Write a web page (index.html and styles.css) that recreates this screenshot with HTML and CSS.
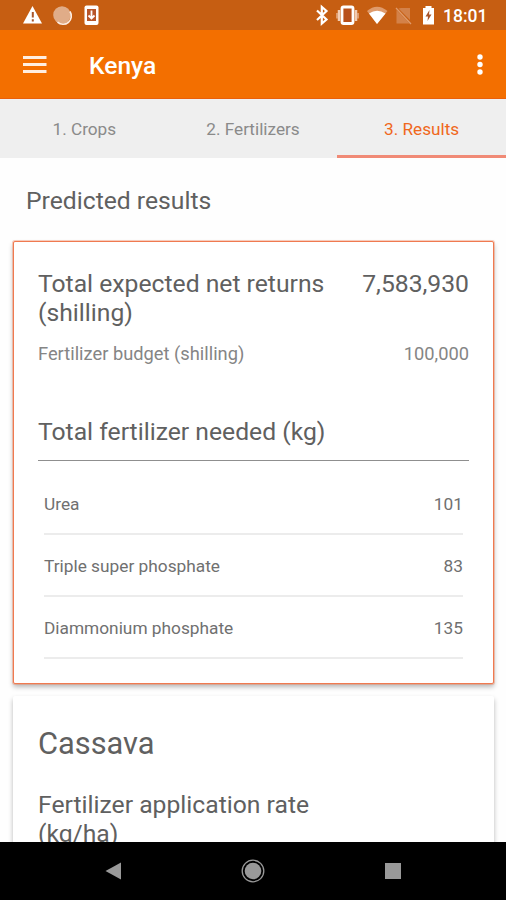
FILE: index.html
```
<!DOCTYPE html>
<html lang="en">
<head>
    <meta charset="UTF-8">
    <meta name="viewport" content="width=device-width, initial-scale=1.0">
    <title>Kenya - Results</title>
    <link rel="stylesheet" href="styles.css">
</head>
<body>
    <div class="status-bar">
        <svg width="120" height="30" viewBox="0 0 120 30">
            <path d="M32.5 6 L42 23.5 H23 Z" fill="#fff"/>
            <path d="M32.8 12 V17.5 M32.8 19.3 V21.5" stroke="#a8552a" stroke-width="2"/>
            <circle cx="62" cy="15" r="8.8" fill="#e0ac88"/>
            <path d="M70 11.5 A8.3 8.3 0 0 1 57.5 22.2" fill="none" stroke="#fdeee4" stroke-width="1.6"/>
            <rect x="84.5" y="5.5" width="14" height="19.5" rx="2" fill="#fff"/>
            <rect x="87" y="9" width="9" height="12" fill="#b8562a"/>
            <path d="M91.5 10.5 V18 M88.5 15.5 L91.5 18.5 L94.5 15.5" fill="none" stroke="#fff" stroke-width="1.8"/>
        </svg>
        <svg class="status-right" width="138" height="30" viewBox="0 0 138 30">
            <path d="M17 10.5 L26.5 19.5 L21.8 23.5 V7 L26.5 11 L17 20" fill="none" stroke="#fff" stroke-width="2.2"/>
            <rect x="42" y="7" width="11" height="16.5" rx="1.5" fill="#b8501a" stroke="#fff" stroke-width="2.8"/>
            <path d="M39 10 V21 M56 10 V21" stroke="#f1cdb5" stroke-width="2.5"/>
            <path d="M37 13 V18.5 M58 13 V18.5" stroke="#e6b08b" stroke-width="1.5"/>
            <path d="M67 11 Q77 2.5 87.5 11 L77 24 Z" fill="#df9b6c"/>
            <path d="M69 13.5 Q77 8 85.5 13.5 L77 24 Z" fill="#fff"/>
            <path d="M101 8 H110 V20 L98.500 8.500 Z M96.500 10 L109.500 23.500 H96.500 Z" fill="#d38149"/>
            <path d="M96 8 L111 24" stroke="#df9b6c" stroke-width="1.2"/>
            <path d="M125.5 6 H131.5 V8 H134 V24.5 H123 V8 H125.5 Z" fill="#fff"/>
            <path d="M129.5 10 L125.5 16.5 H128 L127.5 21 L131.5 14.5 H129 Z" fill="#a8552a"/>
        </svg>
        <span class="clock">18:01</span>
    </div>

    <div class="app-bar">
        <svg class="menu-icon" width="24" height="18" viewBox="0 0 24 18">
            <path d="M0 1.500 H23.500 M0 8.500 H23.500 M0 15.500 H23.500" stroke="#ffeee0" stroke-width="2.8"/>
        </svg>
        <h1>Kenya</h1>
        <svg class="more-icon" width="6" height="22" viewBox="0 0 6 22">
            <circle cx="3" cy="3" r="2.7" fill="#fff"/>
            <circle cx="3" cy="10.5" r="2.7" fill="#fff"/>
            <circle cx="3" cy="18" r="2.7" fill="#fff"/>
        </svg>
    </div>

    <div class="tabs">
        <div class="tab">1. Crops</div>
        <div class="tab">2. Fertilizers</div>
        <div class="tab active">3. Results</div>
    </div>

    <div class="content">
        <h2 class="page-title">Predicted results</h2>

        <div class="card summary">
            <div class="line returns">
                <span>Total expected net returns (shilling)</span>
                <span>7,583,930</span>
            </div>
            <div class="line budget">
                <span>Fertilizer budget (shilling)</span>
                <span>100,000</span>
            </div>
            <h3 class="needed">Total fertilizer needed (kg)</h3>
            <div class="list">
                <div class="row"><span>Urea</span><span>101</span></div>
                <div class="row"><span>Triple super phosphate</span><span>83</span></div>
                <div class="row"><span>Diammonium phosphate</span><span>135</span></div>
            </div>
        </div>

        <div class="card crop">
            <h2 class="crop-name">Cassava</h2>
            <p class="crop-rate">Fertilizer application rate (kg/ha)</p>
        </div>
    </div>

    <div class="nav-bar">
        <svg width="24" height="24" viewBox="0 0 24 24">
            <path d="M4.5 12 L20 3.5 V20.5 Z" fill="#999"/>
        </svg>
        <svg width="24" height="24" viewBox="0 0 24 24">
            <circle cx="12" cy="12" r="8.3" fill="#999"/>
            <circle cx="12" cy="12" r="10.8" fill="none" stroke="#999" stroke-width="1.3"/>
        </svg>
        <svg width="24" height="24" viewBox="0 0 24 24">
            <rect x="4" y="4" width="16" height="16" fill="#999"/>
        </svg>
    </div>
</body>
</html>
```
FILE: styles.css
```
* {
    box-sizing: border-box;
}
body {
    margin: 0;
    height: 900px;
    display: flex;
    flex-direction: column;
    overflow: hidden;
    font-family: Roboto, sans-serif;
    background-color: #fefefe;
    color: #606060;
}
h1, h2, h3, p {
    margin: 0;
    font-weight: 400;
}
.status-bar {
    display: flex;
    height: 30px;
    flex: none;
    background-color: #c65e12;
}
.status-right {
    margin-left: 180px;
}
.clock {
    padding-left: 5px;
    line-height: 32px;
    font-size: 17.5px;
    font-weight: 500;
    color: #fff;
}
.app-bar {
    display: flex;
    align-items: center;
    flex: none;
    height: 69px;
    padding: 2px 23px 0;
    background-color: #f36f00;
    border-bottom: 1px solid #ea5f0a;
}
.app-bar h1 {
    margin-left: 42px;
    font-size: 24.6px;
    font-weight: 500;
    color: #fff;
}
.more-icon {
    margin-left: auto;
}
.tabs {
    display: grid;
    grid-template-columns: repeat(3, 1fr);
    flex: none;
    height: 59px;
    background-color: #efefef;
}
.tab {
    padding-top: 4px;
    line-height: 52px;
    font-size: 17.2px;
    text-align: center;
    color: #8a8a8a;
}
.tab.active {
    color: #f0681c;
    border-bottom: 3px solid #f08a76;
}
.content {
    flex: 1;
    min-height: 0;
    overflow: hidden;
    padding: 0 12px 0 13px;
}
.page-title {
    padding: 28px 0 0 13px;
    font-size: 24.7px;
    line-height: 29px;
}
.card {
    background-color: #fff;
    border-radius: 2px;
    box-shadow: 0 3px 5px rgba(0, 0, 0, 0.28);
}
.summary {
    height: 443px;
    margin-top: 26px;
    padding: 27px 24px 0;
    border: 1px solid #f07a50;
    box-shadow: 0 0 0 1px rgba(240, 122, 80, 0.35), 0 3px 5px rgba(0, 0, 0, 0.28);
}
.line {
    display: flex;
    justify-content: space-between;
}
.returns {
    font-size: 24.7px;
    line-height: 29px;
}
.returns span:first-child {
    width: 300px;
}
.budget {
    margin-top: 17px;
    font-size: 18.3px;
    line-height: 20px;
    color: #858585;
}
.needed {
    margin-top: 53px;
    padding-bottom: 14px;
    font-size: 24.7px;
    line-height: 29px;
    border-bottom: 1px solid #8f8f8f;
}
.list {
    padding: 12px 6px 0;
}
.row {
    display: flex;
    justify-content: space-between;
    height: 62px;
    padding-top: 21px;
    font-size: 17.3px;
    line-height: 20px;
    color: #707070;
    border-bottom: 2px solid #ececec;
}
.crop {
    height: 300px;
    margin-top: 12px;
    padding: 30px 25px 0;
}
.crop-name {
    font-size: 30.8px;
    line-height: 35px;
}
.crop-rate {
    width: 320px;
    margin-top: 29px;
    font-size: 24.7px;
    line-height: 29px;
}
.nav-bar {
    display: flex;
    justify-content: space-between;
    align-items: center;
    flex: none;
    height: 58px;
    padding: 0 101px;
    background-color: #000;
}
```
